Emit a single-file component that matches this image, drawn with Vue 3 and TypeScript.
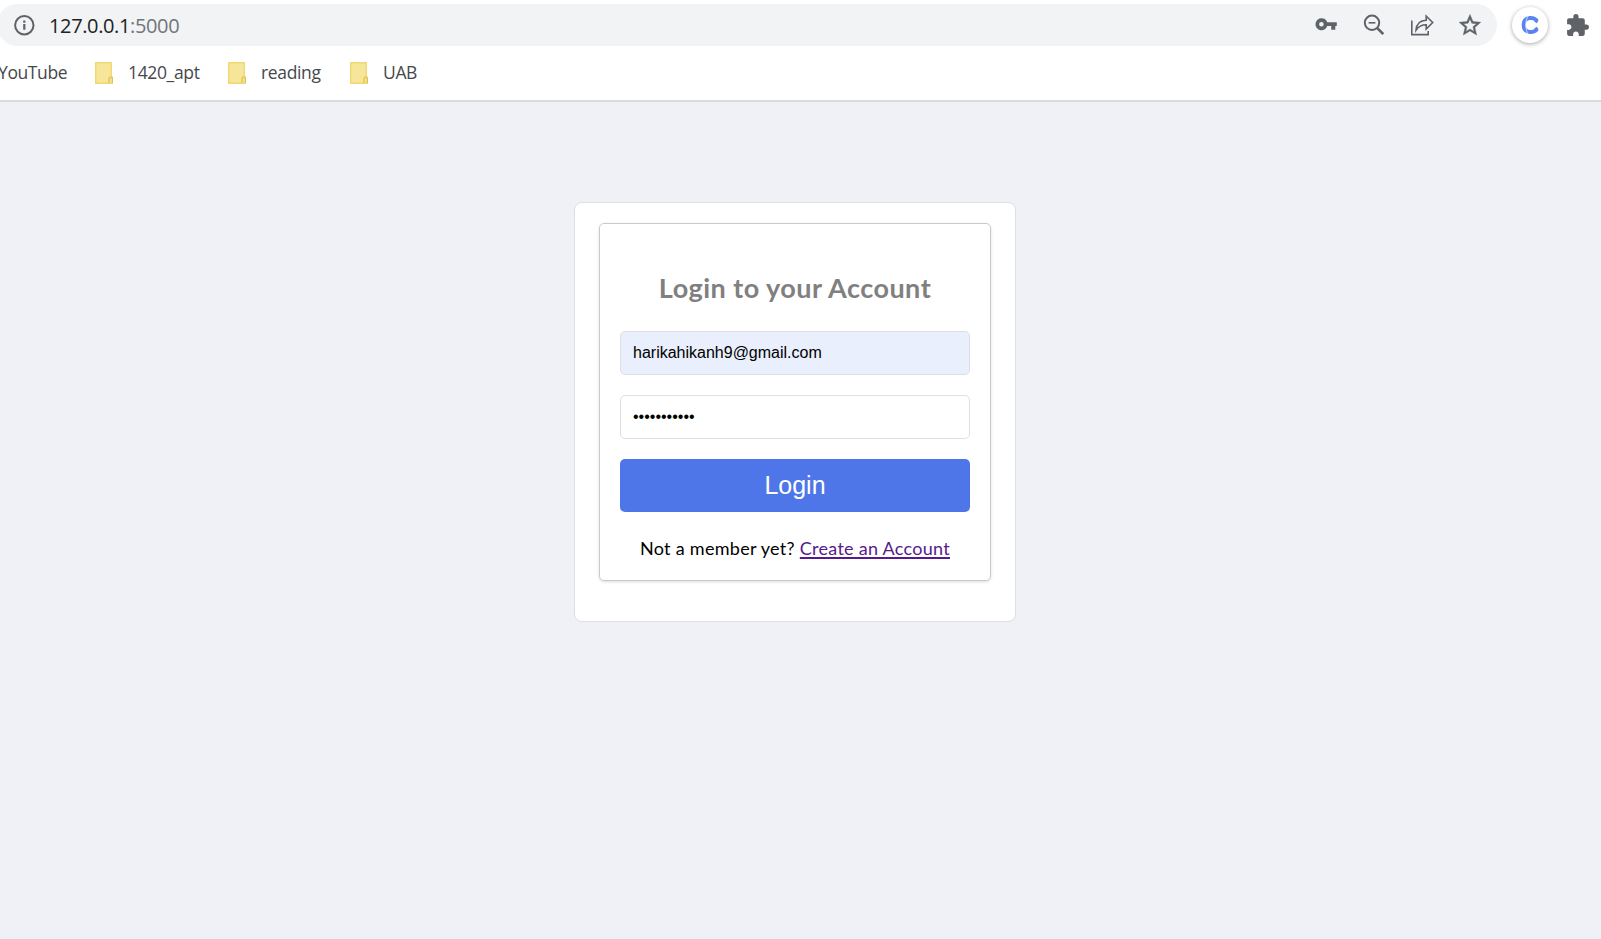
<script setup lang="ts">
import { ref } from 'vue'

const folders: { name: string; key: string }[] = [
  { name: '1420_apt', key: 'apt' },
  { name: 'reading', key: 'reading' },
  { name: 'UAB', key: 'uab' },
]
const email = ref('harikahikanh9@gmail.com')
const password = ref('abcdefghijk')
</script>

<template>
  <div class="window">
    <header class="chrome">
      <div class="toolbar">
        <div class="address">
          <svg class="info" width="22" height="22" viewBox="0 0 22 22">
            <circle cx="11.3" cy="11.3" r="9.2" fill="none" stroke="#5f6368" stroke-width="2" />
            <path d="M10.2 10.1h2.2v5.6h-2.2zM10.2 6.5h2.2v2.2h-2.2z" fill="#5f6368" />
          </svg>
          <span class="url"><span class="host">127.0.0.1</span><span class="port">:5000</span></span>
          <div class="actions">
            <svg width="24" height="24" viewBox="0 0 24 24">
              <path fill="#5f6368" fill-rule="evenodd" d="M7.6 5.3a6 6 0 0 1 5.6 4H22.8v3.8h-1.5v3.6h-4.1v-3.6h-4a6 6 0 1 1-5.6-7.8zM7.4 9a2.3 2.3 0 1 0 0 4.6 2.3 2.3 0 0 0 0-4.6z" />
            </svg>
            <svg width="24" height="24" viewBox="0 0 24 24" fill="none" stroke="#5f6368">
              <circle cx="10" cy="9.8" r="7.2" stroke-width="2" />
              <path d="M6.6 9.8h6.8" stroke-width="1.6" />
              <path d="M15.3 15.1l6 6" stroke-width="2.7" />
            </svg>
            <svg width="24" height="24" viewBox="0 0 24 24" fill="none" stroke="#5f6368" stroke-width="1.6">
              <path d="M1.8 7.5v14.1h16.4v-3.7" />
              <path d="M6 17.2C6.4 10.8 9.8 7.6 16.2 7.3V3.1l6.5 6.4-6.5 6.5v-4.2c-4.4 0-7.6 1.5-10.2 5.4z" stroke-linejoin="miter" />
            </svg>
            <svg width="24" height="24" viewBox="0 0 24 24">
              <path fill="#5f6368" stroke="#5f6368" stroke-width=".4" transform="translate(-1 -.7) scale(1.08)" d="M22 9.24l-7.19-.62L12 2 9.19 8.63 2 9.24l5.46 4.73L5.82 21 12 17.27 18.18 21l-1.63-7.03L22 9.24zM12 15.4l-3.76 2.27 1-4.28-3.32-2.88 4.38-.38L12 6.1l1.71 4.04 4.38.38-3.32 2.88 1 4.28L12 15.4z" />
            </svg>
          </div>
        </div>
        <div class="extension">
          <svg width="20" height="20" viewBox="0 0 20 20" fill="none">
            <path d="M17 6.2C14.8 1.6 3.7 1.2 3.7 10S14.8 18.4 17 13.8" stroke="#5b83ef" stroke-width="4" />
            <path d="M8.4 .6C5 5 5 15 8.4 19.4" stroke="#fff" stroke-width=".7" />
            <path d="M15 4.6l2.2 2.9M15 15.4l2.2-2.9" stroke="#5b83ef" stroke-width="2.6" />
          </svg>
        </div>
        <svg class="puzzle" width="25" height="25" viewBox="0 0 24 24">
          <path fill="#5f6368" d="M20.5 11H19V7c0-1.1-.9-2-2-2h-4V3.5a2.5 2.5 0 0 0-5 0V5H4c-1.1 0-1.99.9-1.99 2v3.8H3.5c1.49 0 2.7 1.21 2.7 2.7s-1.21 2.7-2.7 2.7H2V20c0 1.1.9 2 2 2h3.8v-1.5c0-1.49 1.21-2.7 2.7-2.7s2.7 1.21 2.7 2.7V22H17c1.1 0 2-.9 2-2v-4h1.5a2.5 2.5 0 0 0 0-5z" />
        </svg>
      </div>
      <nav class="bookmarks">
        <span class="label youtube">YouTube</span>
        <span v-for="folder in folders" :key="folder.key" class="folder">
          <svg width="20" height="22" viewBox="0 0 20 22">
            <path d="M1.7 .7h15.6v14.4h1v6.2H1.7z" fill="#f7e59a" stroke="#f1d872" stroke-width="1.4" />
            <path d="M15 21v-4.4q0-1.6 1.7-1.6t1.7 1.6V21" fill="#f5e193" stroke="#dfc04d" stroke-width="1.2" />
          </svg>
          <span class="label" :class="folder.key">{{ folder.name }}</span>
        </span>
      </nav>
    </header>
    <main class="page">
      <section class="card">
        <form class="login" @submit.prevent>
          <h2>Login to your Account</h2>
          <input v-model="email" class="email" type="text" />
          <input v-model="password" class="password" type="password" />
          <button type="submit">Login</button>
          <p>Not a member yet? <a href="#">Create an Account</a></p>
        </form>
      </section>
    </main>
  </div>
</template>

<style>
body {
  overflow: hidden;
}
</style>

<style scoped>
.window {
  display: flex;
  flex-direction: column;
  width: 1601px;
  height: 939px;
  background: #f0f1f6;
}
.chrome {
  box-sizing: border-box;
  height: 102px;
  padding-top: 4px;
  border-bottom: 2px solid #d9dbdf;
  background: #fff;
  font-family: "Open Sans", "Noto Sans", sans-serif;
}
.toolbar {
  display: flex;
  align-items: center;
  height: 42px;
}
.address {
  display: flex;
  align-items: center;
  box-sizing: border-box;
  width: 1500px;
  height: 42px;
  margin-left: -3px;
  padding: 0 15px 0 16px;
  border-radius: 21px;
  background: #f1f3f4;
}
.url {
  margin-left: 14px;
  padding-top: 2px;
  font-size: 20px;
  line-height: 40px;
  letter-spacing: -0.37px;
  white-space: nowrap;
}
.host {
  color: #202124;
}
.port {
  color: #70757a;
}
.actions {
  display: flex;
  gap: 24px;
  margin-left: auto;
}
.extension {
  display: flex;
  align-items: center;
  justify-content: center;
  width: 36px;
  height: 36px;
  margin-left: 15px;
  border-radius: 50%;
  background: #fff;
  box-shadow: 0 1px 4px rgba(0, 0, 0, 0.35);
}
.puzzle {
  margin-left: 17px;
}
.bookmarks {
  display: flex;
  align-items: center;
  height: 54px;
}
.label {
  margin-top: -3px;
  font-size: 17.5px;
  line-height: 24px;
  letter-spacing: -0.35px;
  color: #45484c;
  white-space: nowrap;
}
.youtube {
  width: 69px;
  margin-left: -2px;
  letter-spacing: -0.4px;
}
.folder {
  display: flex;
  align-items: center;
  width: 133px;
  margin-left: 27px;
}
.folder + .folder {
  margin-left: 0;
}
.folder:last-child {
  margin-left: -11px;
}
.folder .label {
  margin-left: 14px;
}
.page {
  flex: 1;
}
.card {
  box-sizing: border-box;
  width: 442px;
  height: 420px;
  margin: 100px 0 0 574px;
  padding: 20px 24px;
  border: 1px solid #dddfe2;
  border-radius: 8px;
  background: #fff;
}
.login {
  display: flex;
  flex-direction: column;
  box-sizing: border-box;
  height: 358px;
  padding: 46px 20px 0;
  border: 1px solid #c9cacc;
  border-radius: 5px;
  box-shadow: 0 1px 3px rgba(0, 0, 0, 0.14);
  font-family: Lato, sans-serif;
}
h2 {
  height: 36px;
  margin: 0 0 25px;
  font-size: 27px;
  line-height: 36px;
  font-weight: 700;
  letter-spacing: 0.47px;
  color: #808080;
  text-align: center;
  white-space: nowrap;
}
input {
  box-sizing: border-box;
  width: 350px;
  height: 44px;
  margin: 0 0 20px;
  padding: 0 12px;
  border: 1px solid #dddfe2;
  border-radius: 5px;
  outline: none;
  background: #fff;
  color: #000;
  font: 16px "Liberation Sans", Arial, sans-serif;
}
.email {
  background: #e9effc;
}
button {
  height: 53px;
  padding: 0;
  border: 0;
  border-radius: 5px;
  background: #4e76e8;
  color: #fff;
  font: 25px "Liberation Sans", Arial, sans-serif;
}
p {
  margin: 23px 0 0;
  font-size: 18px;
  line-height: 26px;
  letter-spacing: 0.28px;
  color: #000;
  text-align: center;
  white-space: nowrap;
}
a {
  color: #551a8b;
  text-decoration-thickness: 2px;
  text-underline-offset: 2px;
  text-decoration-skip-ink: none;
}
</style>
